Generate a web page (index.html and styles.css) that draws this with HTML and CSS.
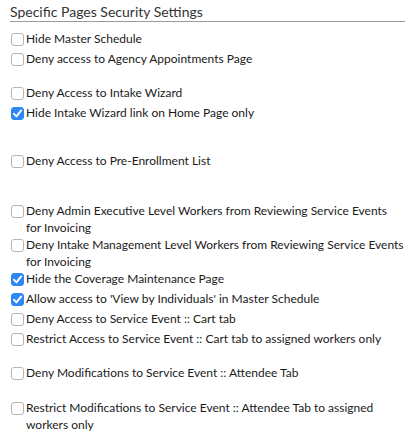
FILE: index.html
```html
<!DOCTYPE html>
<html lang="en">
<head>
    <meta charset="UTF-8">
    <title>Specific Pages Security Settings</title>
    <link rel="stylesheet" href="styles.css">
</head>
<body>
    <div class="settings">
        <h3 class="section-title">Specific Pages Security Settings</h3>

        <label class="option"><input type="checkbox"><span>Hide Master Schedule</span></label>
        <label class="option"><input type="checkbox"><span>Deny access to Agency Appointments Page</span></label>

        <div class="spacer sm"></div>
        <label class="option"><input type="checkbox"><span>Deny Access to Intake Wizard</span></label>
        <label class="option"><input type="checkbox" checked><span>Hide Intake Wizard link on Home Page only</span></label>

        <div class="spacer md"></div>
        <label class="option"><input type="checkbox"><span>Deny Access to Pre-Enrollment List</span></label>

        <div class="spacer lg"></div>
        <label class="option"><input type="checkbox"><span>Deny Admin Executive Level Workers from Reviewing Service Events for Invoicing</span></label>
        <label class="option"><input type="checkbox"><span>Deny Intake Management Level Workers from Reviewing Service Events for Invoicing</span></label>
        <label class="option"><input type="checkbox" checked><span>Hide the Coverage Maintenance Page</span></label>
        <label class="option"><input type="checkbox" checked><span>Allow access to 'View by Individuals' in Master Schedule</span></label>
        <label class="option"><input type="checkbox"><span>Deny Access to Service Event :: Cart tab</span></label>
        <label class="option"><input type="checkbox"><span>Restrict Access to Service Event :: Cart tab to assigned workers only</span></label>

        <div class="spacer sm"></div>
        <label class="option"><input type="checkbox"><span>Deny Modifications to Service Event :: Attendee Tab</span></label>

        <div class="spacer sm wide"></div>
        <label class="option"><input type="checkbox"><span>Restrict Modifications to Service Event :: Attendee Tab to assigned workers only</span></label>
    </div>
</body>
</html>
```

FILE: styles.css
```css
body {
    margin: 0;
    background-color: #fff;
    font-family: Lato, "Open Sans", sans-serif;
    color: #1a1a1a;
}
.settings {
    padding: 0 4px 0 10px;
}
.section-title {
    margin: 0 0 8px;
    padding-top: 3px;
    font-size: 14px;
    font-weight: normal;
    line-height: 18px;
    color: #333;
    border-bottom: 1px solid #9a9a9a;
}
.option {
    display: flex;
    align-items: flex-start;
    font-size: 12px;
    line-height: 17px;
}
.option input {
    appearance: none;
    flex: none;
    width: 13px;
    height: 13px;
    margin: 3px 2px 4px 1px;
    border: 1px solid #b5b5b5;
    border-radius: 3px;
    background-color: #fff;
}
.option input:checked {
    border-color: #2d88f5;
    background: #2d88f5 url("data:image/svg+xml,%3Csvg xmlns='http://www.w3.org/2000/svg' viewBox='0 0 13 13'%3E%3Cpath d='M3 6.8l2.4 2.6L10.2 3.4' fill='none' stroke='%23fff' stroke-width='1.9' stroke-linecap='round' stroke-linejoin='round'/%3E%3C/svg%3E") center / 13px 13px no-repeat;
}
.spacer.sm {
    height: 14px;
}
.spacer.sm.wide {
    height: 15px;
}
.spacer.md {
    height: 28px;
}
.spacer.lg {
    height: 30px;
}
```
